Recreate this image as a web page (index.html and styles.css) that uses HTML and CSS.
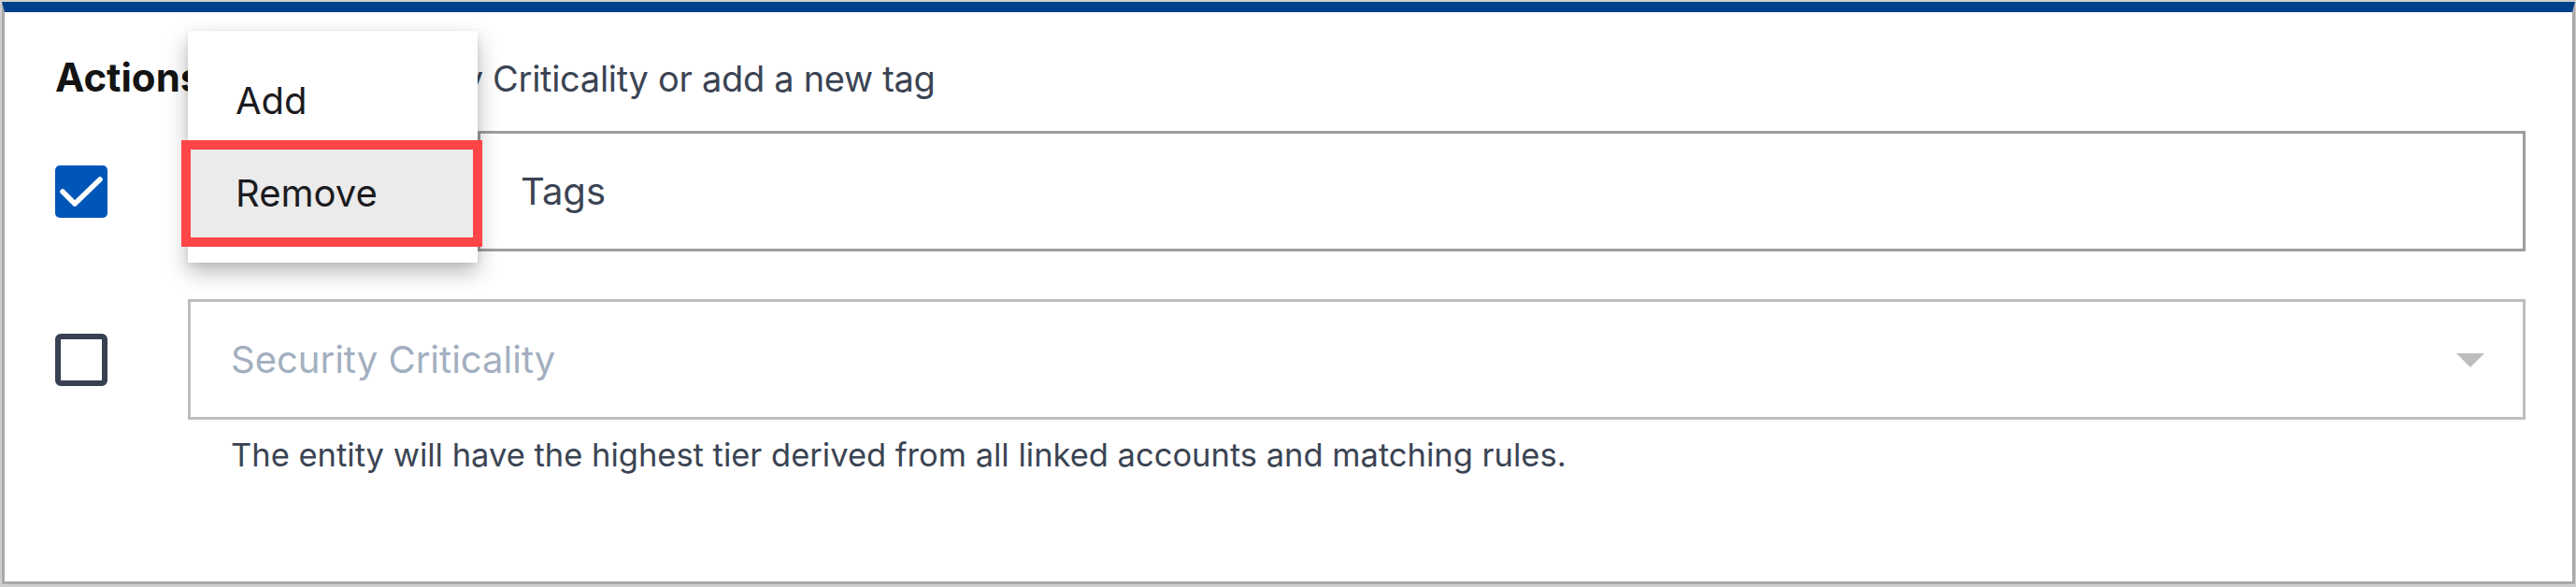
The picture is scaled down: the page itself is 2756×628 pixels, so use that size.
FILE: index.html
```html
<!DOCTYPE html>
<html lang="en">
<head>
<meta charset="utf-8">
<title>Actions</title>
<link rel="stylesheet" href="styles.css">
</head>
<body>
<div class="panel">
  <div class="header">
    <span class="title">Actions</span>
    <span class="desc">Set Security Criticality or add a new tag</span>
  </div>

  <div class="row">
    <span class="cb cb-on">
      <svg viewBox="0 0 56 56" width="56" height="56" aria-hidden="true">
        <polyline points="8,28 21,41 48,15" fill="none" stroke="#ffffff" stroke-width="5.5" stroke-linecap="round" stroke-linejoin="round"/>
      </svg>
    </span>
    <div class="field">
      <div class="op-select">
        <div class="menu">
          <div class="item item-add">Add</div>
          <div class="item item-remove">Remove<span class="mark"></span></div>
        </div>
      </div>
      <div class="tags-input">Tags</div>
    </div>
  </div>

  <div class="row row-crit">
    <span class="cb cb-off"></span>
    <div class="field-col">
      <div class="select">
        <span class="ph">Security Criticality</span>
        <span class="caret"></span>
      </div>
      <p class="help">The entity will have the highest tier derived from all linked accounts and matching rules.</p>
    </div>
  </div>
</div>
</body>
</html>
```

FILE: styles.css
```css
* { box-sizing: border-box; }

html, body {
  margin: 0;
  width: 2756px;
  height: 628px;
}

body {
  background: #cfcfcf;
  padding: 2px 1px 3px 2px;
  font-family: "Inter", "Noto Sans", "Liberation Sans", sans-serif;
  color: #3b4453;
}

.panel {
  height: 100%;
  background: #ffffff;
  border: 3px solid #a9a9a9;
  border-top: 11px solid #00408b;
  padding: 0 50px 0 54px;
}

.header {
  display: flex;
  align-items: baseline;
  height: 50px;
  margin-top: 45px;
  line-height: 50px;
}

.title {
  font-size: 42px;
  font-weight: 700;
  color: #141414;
}

.desc {
  font-size: 38px;
  letter-spacing: -0.3px;
  margin-left: 85px;
  color: #3b4453;
}

.row {
  display: flex;
  align-items: flex-start;
  margin-top: 32px;
}

.row-crit {
  margin-top: 51px;
}

.cb {
  flex: none;
  width: 56px;
  height: 56px;
  margin-top: 37px;
  margin-right: 86px;
  border-radius: 5px;
  display: block;
}

.cb svg { display: block; }

.cb-on {
  background: #0056b8;
}

.cb-off {
  border: 6px solid #374151;
  border-radius: 6px;
}

.field {
  flex: 1;
  display: flex;
  height: 129px;
}

.op-select {
  position: relative;
  flex: none;
  width: 310px;
  height: 129px;
}

.tags-input {
  flex: 1;
  height: 129px;
  border: 3px solid #9e9e9e;
  padding-left: 43px;
  display: flex;
  align-items: center;
  font-size: 40px;
  line-height: 48px;
  color: #3b4453;
}

.menu {
  position: absolute;
  left: 0;
  top: -107px;
  width: 310px;
  height: 248px;
  background: #ffffff;
  box-shadow: 0 10px 22px rgba(0, 0, 0, 0.28), 0 2px 6px rgba(0, 0, 0, 0.08);
  z-index: 5;
}

.item {
  position: relative;
  font-size: 40px;
  line-height: 48px;
  color: #1b1b1f;
  padding-left: 51px;
}

.item-add {
  height: 117px;
  padding-top: 51px;
}

.item-remove {
  height: 114px;
  padding-top: 33px;
  background: #ebebeb;
}

.mark {
  position: absolute;
  left: -7px;
  right: -5px;
  top: 0;
  bottom: 0;
  border: 10px solid #ff4547;
}

.field-col {
  flex: 1;
}

.select {
  height: 129px;
  border: 3px solid #bdbdbd;
  padding: 0 41px 0 43px;
  display: flex;
  align-items: center;
  justify-content: space-between;
}

.ph {
  font-size: 40px;
  line-height: 48px;
  color: #a3afc0;
}

.caret {
  width: 0;
  height: 0;
  border-left: 15px solid transparent;
  border-right: 15px solid transparent;
  border-top: 15px solid #bdbdbd;
  margin-top: 2px;
}

.help {
  margin: 17px 0 0 46px;
  font-size: 34.5px;
  line-height: 42px;
  color: #3b4453;
}
```
